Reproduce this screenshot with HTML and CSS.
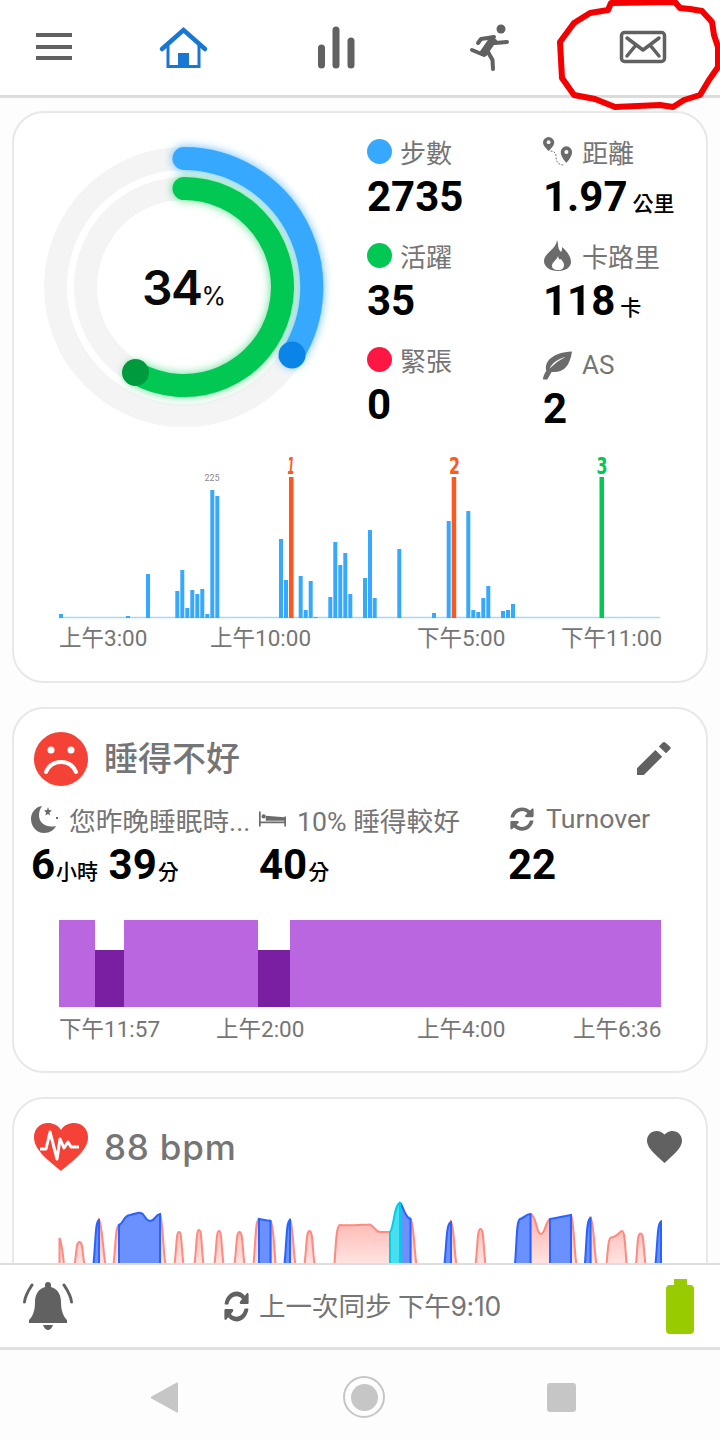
FILE: index.html
```html
<!DOCTYPE html>
<html lang="zh-Hant">
<head>
    <meta charset="UTF-8">
    <meta name="viewport" content="width=device-width, initial-scale=1.0">
    <title>Dashboard</title>
    <link rel="stylesheet" href="styles.css">
</head>
<body>
<div class="app">
    <header class="topbar">
        <svg class="tab" viewBox="0 0 144 96"><path class="tab-grey" d="M36 33h36v4H36zM36 45h36v4H36zM36 56h36v4H36z"/></svg>
        <svg class="tab" viewBox="144 0 144 96">
            <path class="home-roof" d="M162 49L183.500 30L205 49"/>
            <path class="home-wall" d="M168 45V66.500H199V45"/>
            <path class="home-door" d="M178 53h11v14h-11z"/>
        </svg>
        <svg class="tab" viewBox="288 0 144 96">
            <path class="tab-grey" d="M318 48a3.500 3.500 0 0 1 7 0v17a3.500 3.500 0 0 1-7 0zM332.500 30a3.500 3.500 0 0 1 7 0v35a3.500 3.500 0 0 1-7 0zM347.500 41a3.500 3.500 0 0 1 7 0v24a3.500 3.500 0 0 1-7 0z"/>
        </svg>
        <svg class="tab" viewBox="432 0 144 96">
            <circle class="tab-grey" cx="501" cy="29" r="4.500"/>
            <path class="run-body" d="M494 38L483 54"/>
            <path class="run-limb" d="M494 37L481 39L478 43M495 43L507 42M484 55L472 50M488 52L492.500 60L493 69"/>
        </svg>
        <svg class="tab" viewBox="576 0 144 96">
            <rect class="mail-line" x="621.500" y="32.500" width="43" height="29" rx="3"/>
            <path class="mail-line" d="M627 38L643 50L659 38M627 56L636 45M659 56L650 45"/>
        </svg>
    </header>

    <main class="feed">
        <section class="card card-day">
            <div class="summary">
                <svg class="ring" viewBox="34 137 300 300">
                    <circle class="track" cx="184" cy="287" r="128.500"/>
                    <circle class="track" cx="184" cy="287" r="98.500"/>
                    <path class="arc arc-blue" d="M184 158.500A128.500 128.500 0 0 1 292 355.500"/>
                    <path class="arc arc-green" d="M184 188.500A98.500 98.500 0 1 1 136 373"/>
                    <circle class="end-blue" cx="292" cy="355" r="13.500"/>
                    <circle class="end-green" cx="135.500" cy="372.500" r="13.500"/>
                    <text class="ring-num" x="142" y="305">34<tspan class="ring-pct">%</tspan></text>
                </svg>
                <div class="stats">
                    <div class="stat">
                        <div class="stat-label"><span class="dot dot-blue"></span>步數</div>
                        <div class="num">2735</div>
                    </div>
                    <div class="stat">
                        <div class="stat-label">
                            <svg class="stat-icon" viewBox="0 0 31 31">
                                <path class="grey-fill" d="M6 0a6 6 0 0 1 6 6c0 4-6 9-6 9s-6-5-6-9a6 6 0 0 1 6-6z"/>
                                <circle class="hole" cx="6" cy="5.500" r="2"/>
                                <path class="grey-fill" d="M25 10a6 6 0 0 1 6 6.500c0 5-6 11-6 11s-6-6-6-11a6 6 0 0 1 6-6.500z"/>
                                <circle class="hole" cx="25" cy="16" r="2.200"/>
                                <path class="trail" d="M8 15c5 0 6 3 6 7s2 8 9 8"/>
                            </svg>距離
                        </div>
                        <div class="num">1.97<span class="unit unit-gap">公里</span></div>
                    </div>
                    <div class="stat">
                        <div class="stat-label"><span class="dot dot-green"></span>活躍</div>
                        <div class="num">35</div>
                    </div>
                    <div class="stat">
                        <div class="stat-label">
                            <svg class="stat-icon" viewBox="0 0 27 31">
                                <path class="grey-fill" fill-rule="evenodd" d="M13 0c2 5 0 8 4 12 1-1 1-3 1-5 5 4 9 10 9 15 0 5-5 9-13 9S0 27 0 21C0 13 12 10 13 0zM14 16c-1 4-6 6-6 10 0 2 2 4 6 4s6-2 6-5c0-3-2-4-3-6-1 1-2 1-3-3z"/>
                            </svg>卡路里
                        </div>
                        <div class="num">118<span class="unit unit-gap">卡</span></div>
                    </div>
                    <div class="stat">
                        <div class="stat-label"><span class="dot dot-red"></span>緊張</div>
                        <div class="num">0</div>
                    </div>
                    <div class="stat stat-low">
                        <div class="stat-label">
                            <svg class="stat-icon" viewBox="0 0 27 26">
                                <path class="grey-fill" d="M27 0c-2 14-8 20-19 19L4 26H0c0-2 1-5 3-8C1 9 9 1 27 0zM21 5C14 7 9 10 6 16c5-5 9-8 15-11z"/>
                            </svg>AS
                        </div>
                        <div class="num">2</div>
                    </div>
                </div>
            </div>

            <svg class="steps" viewBox="14 455 692 167">
                <path class="base" d="M59 617.500H660"/>
                <path class="bar" d="M59 614h4v4h-4zM126 616h4v2h-4zM146 574h4v44h-4zM175.300 591h4v27h-4zM180.300 570h4v48h-4zM185.300 608h4v10h-4zM190.300 590h4v28h-4zM195.300 594h4v24h-4zM200.300 589h4v29h-4zM205.300 614h4v4h-4zM210.300 490h4v128h-4zM215.300 496h4v122h-4zM279 539h4v79h-4zM284 580h4v38h-4zM298.700 576h4v42h-4zM303.700 610h4v8h-4zM308.700 581h4v37h-4zM313.700 617h4v1h-4zM328.300 597h4v21h-4zM333.300 542h4v76h-4zM338.300 565h4v53h-4zM343.300 553h4v65h-4zM348.300 594h4v24h-4zM363 578h4v40h-4zM368 530h4v88h-4zM372.700 598h4v20h-4zM397.300 549h4v69h-4zM432 613h4v5h-4zM446.700 521h4v97h-4zM466.300 511h4v107h-4zM471.300 610h4v8h-4zM476.300 612h4v6h-4zM481.300 598h4v20h-4zM486.300 586h4v32h-4zM501 611h4v7h-4zM506 610h4v8h-4zM511 604h4v14h-4z"/>
                <path class="mark-orange" d="M289 477h4.500v141H289zM451.700 477h4.500v141h-4.500z"/>
                <path class="mark-green" d="M599.500 477h4.500v141h-4.500z"/>
                <text class="peak" x="212" y="481">225</text>
                <text class="flag flag-orange flag-slim" x="291" y="473.500" textLength="7" lengthAdjust="spacingAndGlyphs">1</text>
                <text class="flag flag-orange" x="454.500" y="473.500" textLength="11" lengthAdjust="spacingAndGlyphs">2</text>
                <text class="flag flag-green" x="602" y="473.500" textLength="11" lengthAdjust="spacingAndGlyphs">3</text>
            </svg>
            <div class="axis axis-day">
                <span>上午3:00</span><span>上午10:00</span><span>下午5:00</span><span>下午11:00</span>
            </div>
        </section>

        <section class="card card-sleep">
            <div class="card-head">
                <svg class="head-icon" viewBox="0 0 54 54">
                    <circle class="red-fill" cx="27" cy="27" r="27"/>
                    <circle class="white-fill" cx="17" cy="18" r="3.500"/>
                    <circle class="white-fill" cx="37" cy="18" r="3.500"/>
                    <path class="frown" d="M12 40c3-7 9-10 15-10s12 3 15 10"/>
                </svg>
                <h2 class="card-title">睡得不好</h2>
                <svg class="head-action" viewBox="3 3 18.500 18.500">
                    <path class="tab-grey" d="M3 17.250V21h3.750L16.700 11 13 7.300 3 17.250zM21 7c.4-.4.4-1 0-1.400l-2.600-2.300c-.4-.4-1-.4-1.400 0l-2.100 2.200 3.900 3.600L21 7z"/>
                </svg>
            </div>
            <div class="sleep-stats">
                <div class="sleep-stat">
                    <div class="stat-label">
                        <svg class="sleep-icon" viewBox="0 0 27 28">
                            <path class="grey-fill" d="M11 1C4 2 0 8 0 14c0 8 6 14 13 14 6 0 10-3 12-7-9 2-17-2-17-11 0-3 1-6 3-9z"/>
                            <path class="grey-fill" d="M17 2l1 3 3 .5-2.500 2 .5 3-2-1.500-2.500 1.500.5-3L13 5.500l3-.5zM25 12h2v2h-2z"/>
                        </svg>您昨晚睡眠時...
                    </div>
                    <div class="num">6<span class="unit">小時</span> 39<span class="unit">分</span></div>
                </div>
                <div class="sleep-stat">
                    <div class="stat-label">
                        <svg class="sleep-icon" viewBox="0 0 32 18">
                            <path class="grey-fill" d="M0 0h2v18H0zM2 12h28v2H2zM30 6h2v12h-2zM8 5l22 2v4H8z"/><circle class="grey-fill" cx="5.500" cy="6" r="2.500"/>
                        </svg>10% 睡得較好
                    </div>
                    <div class="num">40<span class="unit">分</span></div>
                </div>
                <div class="sleep-stat">
                    <div class="stat-label">
                        <svg class="sleep-icon sync-small" viewBox="0 0 512 512">
                            <path class="grey-fill" d="M370.720 133.280C339.458 104.008 298.888 87.962 255.848 88c-77.458.068-144.328 53.178-162.791 126.850-1.344 5.363-6.122 9.150-11.651 9.150H24.103c-7.498 0-13.194-6.807-11.807-14.176C33.933 94.924 134.813 8 256 8c66.448 0 126.791 26.136 171.315 68.685L463.030 40.970C478.149 25.851 504 36.559 504 57.941V192c0 13.255-10.745 24-24 24H345.941c-21.382 0-32.090-25.851-16.971-40.971l41.750-41.749zM32 296h134.059c21.382 0 32.090 25.851 16.971 40.971l-41.750 41.750c31.262 29.273 71.835 45.319 114.876 45.280 77.418-.070 144.315-53.144 162.787-126.849 1.344-5.363 6.122-9.150 11.651-9.150h57.304c7.498 0 13.194 6.807 11.807 14.176C478.067 417.076 377.187 504 256 504c-66.448 0-126.791-26.136-171.315-68.685L48.970 471.030C33.851 486.149 8 475.441 8 454.059V320c0-13.255 10.745-24 24-24z"/>
                        </svg>Turnover
                    </div>
                    <div class="num">22</div>
                </div>
            </div>
            <div class="sleep-chart">
                <div class="phase phase-light phase-a"></div>
                <div class="phase phase-deep phase-b"></div>
                <div class="phase phase-light phase-c"></div>
                <div class="phase phase-deep phase-d"></div>
                <div class="phase phase-light phase-e"></div>
            </div>
            <div class="axis axis-sleep">
                <span>下午11:57</span><span>上午2:00</span><span>上午4:00</span><span>上午6:36</span>
            </div>
        </section>

        <section class="card card-heart">
            <div class="card-head">
                <svg class="head-icon heart-icon" viewBox="0 0 54 48">
                    <path class="red-fill" d="M27 48C13 36 0 27 0 14 0 6 6 0 14 0c5 0 10 2 13 7 3-5 8-7 13-7 8 0 14 6 14 14 0 13-13 22-27 34z"/>
                    <path class="ecg" d="M6 26H12L16 9L23 36L26 16L30 25L34 19L37 24H45"/>
                </svg>
                <h2 class="card-title bpm">88 bpm</h2>
                <svg class="head-action heart-action" viewBox="2 3 20 18.350">
                    <path class="tab-grey" d="M12 21.350l-1.450-1.320C5.400 15.360 2 12.280 2 8.500 2 5.420 4.420 3 7.500 3c1.740 0 3.410.81 4.500 2.090C13.090 3.810 14.760 3 16.500 3 19.580 3 22 5.420 22 8.500c0 3.780-3.400 6.860-8.550 11.540L12 21.350z"/>
                </svg>
            </div>
            <svg class="hr-chart" viewBox="14 1195 692 70">
                <defs>
                    <linearGradient id="hr-rest" gradientUnits="userSpaceOnUse" x1="0" y1="1215" x2="0" y2="1262">
                        <stop offset="0" stop-color="#ffb4ae"/>
                        <stop offset="1" stop-color="#ffe3e1"/>
                    </linearGradient>
                </defs>
                <g class="hr-rest">
                    <path d="M59.500 1237C62 1242 63 1255 64.500 1268H59.500z"/>
                    <path d="M74 1268C77 1250 76 1241 79.500 1241C83 1241 82 1250 85 1268"/>
                    <path d="M99 1219C102 1222 103 1250 106 1268H99z"/>
                    <path d="M113 1268C116 1245 115 1226 119 1224V1268zM160 1213C163 1220 163 1250 166 1268H160z"/>
                    <path d="M174 1268C177 1245 176 1231 179 1231C182 1231 181 1245 184 1268"/>
                    <path d="M194 1268C197 1245 196 1229 199 1229C202 1229 201 1245 204 1268"/>
                    <path d="M214 1268C217 1245 216 1230 219 1230C222 1230 221 1245 224 1268"/>
                    <path d="M234 1268C237 1245 236 1231 239.500 1231C243 1231 242 1245 245 1268"/>
                    <path d="M253 1268C256 1240 255 1220 259 1218V1268zM270.500 1220C274 1224 274 1250 276 1268H270.500z"/>
                    <path d="M290 1219C293 1222 293 1250 296 1268H290z"/>
                    <path d="M304 1268C307 1245 306 1230 309.500 1230C313 1230 312 1245 315 1268"/>
                    <path d="M334 1268C336 1245 336 1224 340 1224C348 1225 358 1224 368 1223.500C374 1223 375 1231 380 1231H390V1268z"/>
                    <path d="M410.500 1218C414 1222 414 1250 417 1268H410.500z"/>
                    <path d="M451 1221C454 1224 454 1250 457 1268H451z"/>
                    <path d="M475 1268C478 1245 477 1228 480.500 1228C484 1228 483 1245 486 1268"/>
                    <path d="M530.500 1213C537 1215 536 1233 541 1233C545 1233 546 1219 550 1218V1268H530.500z"/>
                    <path d="M571 1214C574 1220 574 1250 577 1268H571z"/>
                    <path d="M590.500 1217C594 1220 594 1250 597 1268H590.500z"/>
                    <path d="M606 1268C608 1250 608 1237 611 1236.500C617 1236 620 1230 622 1230C625 1230 625 1245 627 1268"/>
                    <path d="M635.500 1268C638 1245 637 1232.500 640.500 1232.500C644 1232.500 643 1245 646 1268"/>
                </g>
                <g class="hr-high">
                    <path d="M93 1268C96 1240 95 1221 99 1219V1268z"/>
                    <path d="M119 1268V1224C124 1222 123 1215 130 1214C136 1213 138 1211 141 1212C145 1213 145 1220 150 1220C155 1220 155 1214 160 1213V1268z"/>
                    <path d="M259 1268V1218L270.500 1220V1268z"/>
                    <path d="M284 1268C287 1240 286 1221 290 1219V1268z"/>
                    <path d="M400 1202C403 1203 404 1216 410.500 1218V1268H400z"/>
                    <path d="M444 1268C447 1240 446 1223 451 1221V1268z"/>
                    <path d="M514.500 1268C517 1245 516 1220 520 1218C524 1217 526 1213 530.500 1213V1268z"/>
                    <path d="M550 1268V1218L571 1214V1268z"/>
                    <path d="M584.500 1268C587 1240 586 1219 590.500 1217V1268z"/>
                    <path d="M655 1268C658 1240 657 1223 661 1220.500V1268z"/>
                </g>
                <path class="hr-peak" d="M390 1268V1231C394 1227 394 1203 400 1202V1268z"/>
            </svg>
        </section>
    </main>

    <footer class="syncbar">
        <svg class="bell" viewBox="0 0 50 48">
            <path class="tab-grey" d="M25 0a3 3 0 0 1 3 3v2c7 2 10 8 10 15 0 8 2 14 6 18v3H6v-3c4-4 6-10 6-18 0-7 3-13 10-15V3a3 3 0 0 1 3-3zM20 43h10c-1 3-3 5-5 5s-4-2-5-5z"/>
            <path class="bell-wave" d="M9 3C5 9 2 14 1.500 20M41 3C45 9 48 14 48.500 20"/>
        </svg>
        <div class="sync-text">
            <svg class="sync-icon" viewBox="0 0 512 512" preserveAspectRatio="none">
                <path class="tab-grey" d="M370.720 133.280C339.458 104.008 298.888 87.962 255.848 88c-77.458.068-144.328 53.178-162.791 126.850-1.344 5.363-6.122 9.150-11.651 9.150H24.103c-7.498 0-13.194-6.807-11.807-14.176C33.933 94.924 134.813 8 256 8c66.448 0 126.791 26.136 171.315 68.685L463.030 40.970C478.149 25.851 504 36.559 504 57.941V192c0 13.255-10.745 24-24 24H345.941c-21.382 0-32.090-25.851-16.971-40.971l41.750-41.749zM32 296h134.059c21.382 0 32.090 25.851 16.971 40.971l-41.750 41.750c31.262 29.273 71.835 45.319 114.876 45.280 77.418-.070 144.315-53.144 162.787-126.849 1.344-5.363 6.122-9.150 11.651-9.150h57.304c7.498 0 13.194 6.807 11.807 14.176C478.067 417.076 377.187 504 256 504c-66.448 0-126.791-26.136-171.315-68.685L48.970 471.030C33.851 486.149 8 475.441 8 454.059V320c0-13.255 10.745-24 24-24z"/>
            </svg>
            <span class="sync-label">上一次同步 <span class="sync-time">下午9:10</span></span>
        </div>
        <div class="battery"><div class="battery-cap"></div><div class="battery-body"></div></div>
    </footer>

    <nav class="sysnav">
        <svg class="sys-back" viewBox="0 0 27 31"><path class="sys-fill" d="M26 0.500a1 1 0 0 1 1 1v28a1 1 0 0 1-1.600.8L0.500 16.500a1 1 0 0 1 0-2L25.400 0.700z"/></svg>
        <div class="sys-home"><div class="sys-home-dot"></div></div>
        <div class="sys-recent"></div>
    </nav>

    <svg class="scribble" viewBox="0 0 720 112">
        <path d="M611 3L675 2L680 8L690 9L702 11L712 22L714 35L718 47L718 67L709 80L700 95L684 100L673 107L660 105L615 107L595 99L574 95L562 78L560 42L574 23L590 13L608 10z"/>
    </svg>
</div>
</body>
</html>
```

FILE: styles.css
```css
* {
    box-sizing: border-box;
}
body {
    margin: 0;
    background: #fff;
    font-family: Roboto, "Noto Sans CJK TC", sans-serif;
    color: #757575;
}
svg {
    display: block;
}
.app {
    position: relative;
    width: 720px;
    height: 1440px;
    display: flex;
    flex-direction: column;
    overflow: hidden;
    background: #fdfdfd;
}

/* top tabs */
.topbar {
    display: flex;
    flex: 0 0 98px;
    height: 98px;
    background: #fff;
    border-bottom: 3px solid #dcdcdc;
}
.tab {
    width: 144px;
    height: 96px;
    flex: none;
    overflow: visible;
}
.tab-grey {
    fill: #616161;
}
.grey-fill {
    fill: #6b6b6b;
}
.home-roof {
    fill: none;
    stroke: #1976d2;
    stroke-width: 4.500;
    stroke-linecap: round;
    stroke-linejoin: miter;
}
.home-wall {
    fill: none;
    stroke: #1976d2;
    stroke-width: 3;
}
.home-door {
    fill: #1976d2;
}
.run-body {
    fill: none;
    stroke: #616161;
    stroke-width: 8;
}
.run-limb {
    fill: none;
    stroke: #616161;
    stroke-width: 4;
    stroke-linecap: round;
    stroke-linejoin: round;
}
.mail-line {
    fill: none;
    stroke: #616161;
    stroke-width: 3.500;
    stroke-linecap: round;
    stroke-linejoin: round;
}
.scribble {
    position: absolute;
    left: 0;
    top: 0;
    width: 720px;
    height: 112px;
}
.scribble path {
    fill: none;
    stroke: #f50000;
    stroke-width: 6;
    stroke-linejoin: round;
}

/* cards */
.feed {
    flex: 0 0 1165px;
    height: 1165px;
    overflow: hidden;
    padding: 13px 12px 0;
}
.card {
    background: #fff;
    border: 2px solid #e8e8e8;
    border-radius: 32px;
    margin-bottom: 24px;
}
.card-day {
    height: 572px;
}
.summary {
    display: flex;
    height: 342px;
    padding: 24px 0 0 20px;
}
.ring {
    width: 300px;
    height: 300px;
    flex: none;
    overflow: visible;
}
.track {
    fill: none;
    stroke: #f4f4f4;
    stroke-width: 23;
}
.arc {
    fill: none;
    stroke-width: 23;
    stroke-linecap: round;
}
.arc-blue {
    stroke: #36a9ff;
    filter: drop-shadow(0 0 5px rgba(54, 169, 255, 0.8));
}
.arc-green {
    stroke: #00c853;
    filter: drop-shadow(0 0 5px rgba(0, 200, 83, 0.65));
}
.end-blue {
    fill: #0a84e6;
}
.end-green {
    fill: #009a3e;
}
.ring-num {
    font-family: Inter, sans-serif;
    font-size: 48px;
    font-weight: 600;
    fill: #0a0a0a;
    letter-spacing: -1.500px;
}
.ring-pct {
    font-size: 25px;
    font-weight: 400;
}
.stats {
    display: grid;
    grid-template-columns: 176px 1fr;
    grid-auto-rows: 104px;
    margin: -4px 0 0 33px;
}
.stat-label {
    display: flex;
    align-items: center;
    height: 36px;
    font-size: 26px;
    white-space: nowrap;
}
.dot {
    width: 25px;
    height: 25px;
    border-radius: 50%;
    margin-right: 8px;
}
.dot-blue {
    background: #36a9ff;
}
.dot-green {
    background: #00c853;
}
.dot-red {
    background: #ff1744;
}
.stat-icon {
    width: 29px;
    height: 31px;
    margin-right: 10px;
    flex: none;
}
.hole {
    fill: #fff;
}
.trail {
    fill: none;
    stroke: #6b6b6b;
    stroke-width: 1;
    stroke-dasharray: 2 1.500;
}
.stat-low .stat-label {
    margin-top: 6px;
}
.stat-low .num {
    margin-top: 1px;
}
.num {
    color: #000;
    font-size: 42px;
    font-weight: 700;
    line-height: 50px;
    margin-top: 3px;
    white-space: nowrap;
}
.unit {
    font-size: 21px;
    font-weight: 500;
    margin-left: 1px;
}
.unit-gap {
    margin-left: 5px;
}

/* step bars */
.steps {
    width: 692px;
    height: 167px;
    overflow: visible;
}
.base {
    stroke: #a8d8fb;
    stroke-width: 1.500;
}
.bar {
    fill: #36a9ff;
}
.mark-orange {
    fill: #ff5722;
}
.mark-green {
    fill: #00c853;
}
.peak {
    font-size: 9px;
    fill: #8a8a8a;
    text-anchor: middle;
}
.flag {
    font-family: "DejaVu Sans", sans-serif;
    font-size: 23px;
    font-weight: 700;
    text-anchor: middle;
}
.flag-slim {
    font-style: italic;
}
.flag-orange {
    fill: #ff5722;
}
.flag-green {
    fill: #00c853;
}
.axis {
    display: grid;
    font-size: 22.500px;
    line-height: 32px;
    padding-left: 45px;
    white-space: nowrap;
}
.axis-day {
    grid-template-columns: 151px 207px 144px 100px;
}
.axis-sleep {
    grid-template-columns: 157px 201px 156px 88px;
}

/* sleep card */
.card-sleep {
    height: 366px;
}
.card-head {
    display: flex;
    align-items: center;
    padding: 23px 35px 0 20px;
}
.head-icon {
    width: 54px;
    height: 54px;
    flex: none;
}
.red-fill {
    fill: #f44336;
}
.white-fill {
    fill: #fff;
}
.frown {
    fill: none;
    stroke: #fff;
    stroke-width: 4;
    stroke-linecap: round;
}
.card-title {
    flex: 1;
    margin: 0 0 0 16px;
    font-size: 34px;
    font-weight: 500;
    line-height: 54px;
}
.head-action {
    width: 34px;
    height: 34px;
    flex: none;
}
.sleep-stats {
    display: grid;
    grid-template-columns: 228px 249px 1fr;
    padding: 15px 0 0 17px;
}
.sleep-stat .stat-label {
    font-size: 26.700px;
}
.sleep-icon {
    width: 27px;
    height: 28px;
    margin-right: 11px;
    flex: none;
}
.sync-small {
    width: 24px;
    height: 24px;
    margin-right: 12px;
    margin-left: 2px;
}
.sleep-chart {
    display: flex;
    align-items: flex-end;
    height: 87px;
    margin: 23px 45px 0;
    width: 602px;
}
.phase-light {
    background: #b966e0;
    height: 87px;
}
.phase-deep {
    background: #7b1fa2;
    height: 57px;
}
.phase-a {
    width: 36px;
}
.phase-b {
    width: 29px;
}
.phase-c {
    width: 134px;
}
.phase-d {
    width: 32px;
}
.phase-e {
    flex: 1;
}
.axis-sleep {
    margin-top: 6px;
}

/* heart card */
.card-heart {
    height: 240px;
}
.heart-icon {
    height: 48px;
}
.card-heart .card-head {
    padding: 21px 24px 0 20px;
}
.card-heart .head-action {
    width: 35px;
}
.bpm {
    font-family: Inter, sans-serif;
    font-weight: 500;
    font-size: 35px;
    letter-spacing: 0.800px;
}
.ecg {
    fill: none;
    stroke: #fff;
    stroke-width: 3;
    stroke-linejoin: round;
}
.hr-chart {
    width: 692px;
    height: 70px;
    margin-top: 22px;
}
.hr-rest path {
    fill: url(#hr-rest);
    stroke: #ff8a80;
    stroke-width: 2;
}
.hr-high path {
    fill: #6b90ff;
    stroke: #2962ff;
    stroke-width: 2;
}
.hr-peak {
    fill: #4adff0;
    stroke: #00d0e6;
    stroke-width: 2;
}

/* sync bar */
.syncbar {
    display: flex;
    align-items: center;
    flex: 0 0 87px;
    height: 87px;
    background: #fff;
    border-top: 2px solid #dedede;
    border-bottom: 3px solid #e0e0e0;
    padding: 0 26px 0 23px;
}
.bell {
    width: 50px;
    height: 48px;
    flex: none;
    margin-top: -1px;
}
.bell-wave {
    fill: none;
    stroke: #616161;
    stroke-width: 3;
    stroke-linecap: round;
}
.sync-text {
    display: flex;
    align-items: center;
    flex: 1;
    margin-left: 151px;
    font-size: 26.500px;
    white-space: nowrap;
}
.sync-label {
    margin-top: -4px;
}
.sync-time {
    font-family: Inter, "Noto Sans CJK TC", sans-serif;
    letter-spacing: -0.300px;
}
.sync-icon {
    width: 25px;
    height: 31px;
    flex: none;
    margin-right: 10px;
}
.battery {
    width: 28px;
    flex: none;
}
.battery-cap {
    width: 13px;
    height: 6px;
    margin: 0 auto;
    background: #99cc00;
}
.battery-body {
    height: 49px;
    background: #99cc00;
    border-radius: 4px;
}

/* android nav */
.sysnav {
    flex: 0 0 90px;
    height: 90px;
    display: flex;
    align-items: center;
    background: #fdfdfd;
    padding: 4px 0 0 151px;
}
.sys-back {
    width: 27px;
    height: 31px;
    flex: none;
}
.sys-fill {
    fill: #c6c6c6;
}
.sys-home {
    display: flex;
    align-items: center;
    justify-content: center;
    width: 42px;
    height: 42px;
    margin-left: 165px;
    border: 2px solid #c6c6c6;
    border-radius: 50%;
    flex: none;
}
.sys-home-dot {
    width: 27px;
    height: 27px;
    background: #c6c6c6;
    border-radius: 50%;
}
.sys-recent {
    width: 29px;
    height: 29px;
    margin-left: 162px;
    background: #c6c6c6;
    border-radius: 3px;
    flex: none;
}
```
